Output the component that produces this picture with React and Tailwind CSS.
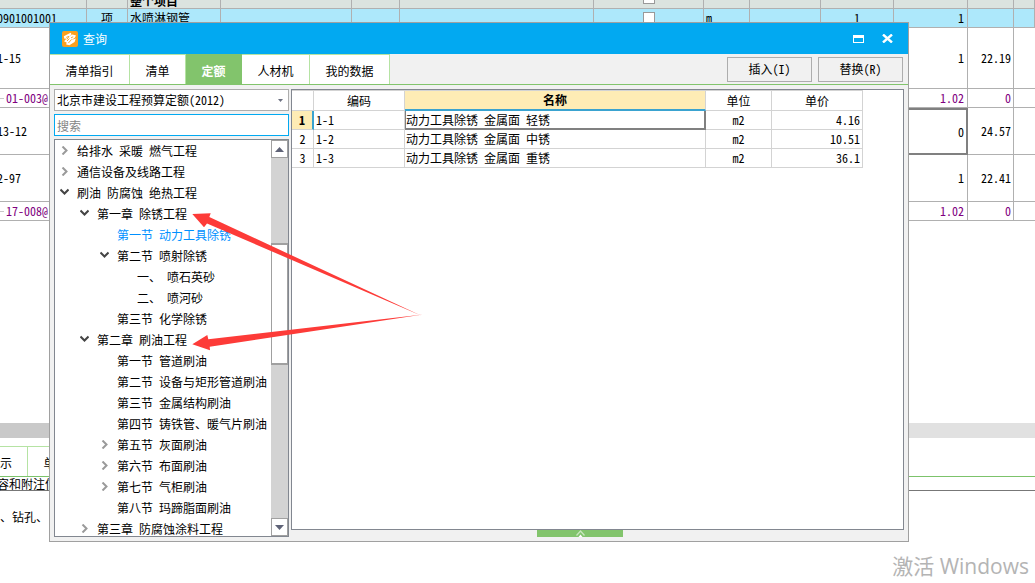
import { clsx } from "clsx";

const headCells = ["", "", "整个项目", "", "", "", "check", "", "", "", "", "", ""];
const itemCells = ["0901001001", "项", "水喷淋钢管", "", "", "", "check", "m", "", "1", "1", "", ""];

const sheetRows = [
  { code: "1-15", amount: "1", price: "22.19", size: "h-[61px]" },
  { code: "01-003@", amount: "1.02", price: "0", size: "h-[19px]", sub: true },
  { code: "13-12", amount: "0", price: "24.57", size: "h-[47px]", selected: true },
  { code: "2-97", amount: "1", price: "22.41", size: "h-[47px]" },
  { code: "17-008@", amount: "1.02", price: "0", size: "h-[19px]", sub: true },
];

const tabs = [
  { name: "清单指引", width: "w-20" },
  { name: "清单", width: "w-14" },
  { name: "定额", width: "w-14", active: true },
  { name: "人材机", width: "w-[68px]" },
  { name: "我的数据", width: "w-20" },
];

const tree = [
  { level: 0, text: "给排水 采暖 燃气工程", state: "closed" },
  { level: 0, text: "通信设备及线路工程", state: "closed" },
  { level: 0, text: "刷油 防腐蚀 绝热工程", state: "open" },
  { level: 1, text: "第一章 除锈工程", state: "open" },
  { level: 2, text: "第一节 动力工具除锈", selected: true },
  { level: 2, text: "第二节 喷射除锈", state: "open" },
  { level: 3, text: "一、 喷石英砂" },
  { level: 3, text: "二、 喷河砂" },
  { level: 2, text: "第三节 化学除锈" },
  { level: 1, text: "第二章 刷油工程", state: "open" },
  { level: 2, text: "第一节 管道刷油" },
  { level: 2, text: "第二节 设备与矩形管道刷油" },
  { level: 2, text: "第三节 金属结构刷油" },
  { level: 2, text: "第四节 铸铁管、暖气片刷油" },
  { level: 2, text: "第五节 灰面刷油", state: "closed" },
  { level: 2, text: "第六节 布面刷油", state: "closed" },
  { level: 2, text: "第七节 气柜刷油", state: "closed" },
  { level: 2, text: "第八节 玛蹄脂面刷油" },
  { level: 1, text: "第三章 防腐蚀涂料工程", state: "closed" },
];

const indents = ["pl-0", "pl-5", "pl-10", "pl-15"];

const quotas = [
  { code: "1-1", name: "动力工具除锈 金属面 轻锈", unit: "m2", price: "4.16" },
  { code: "1-2", name: "动力工具除锈 金属面 中锈", unit: "m2", price: "10.51" },
  { code: "1-3", name: "动力工具除锈 金属面 重锈", unit: "m2", price: "36.1" },
];

const SheetCell = ({ value, index, head }) => (
  <td
    className={clsx(
      "border-r border-b border-[#b0b0b0] p-0 whitespace-nowrap overflow-hidden",
      index === 0 && "-indent-[3px]",
      index === 1 && "text-center",
      index === 2 && "pl-0.5",
      index === 7 && "pl-0.5",
      index === 9 && "text-center",
      index === 10 && "text-right pr-[3px]"
    )}
  >
    <div className={clsx("flex flex-col", head ? "h-2 justify-end font-bold" : "h-[18px] justify-center")}>
      {value === "check" ? (
        <input
          type="checkbox"
          aria-label="选择"
          className={clsx(
            "appearance-none size-3 shrink-0 self-center border border-[#999] bg-white",
            head && "mb-1"
          )}
        />
      ) : (
        <span className={clsx(head && "leading-[14px]")}>{value}</span>
      )}
    </div>
  </td>
);

const Sheet = () => (
  <table className="w-full table-fixed border-separate border-spacing-0">
    <colgroup>
      <col className="w-[87px]" />
      <col className="w-[41px]" />
      <col className="w-[93px]" />
      <col className="w-[131px]" />
      <col className="w-12" />
      <col className="w-[194px]" />
      <col className="w-[110px]" />
      <col className="w-[46px]" />
      <col className="w-[71px]" />
      <col className="w-[73px]" />
      <col className="w-[74px]" />
      <col className="w-[46px]" />
      <col />
    </colgroup>
    <tbody>
      <tr className="bg-[#dbe3df]">
        {headCells.map((value, i) => (
          <SheetCell key={i} value={value} index={i} head />
        ))}
      </tr>
      <tr className="bg-[#ade8fb]">
        {itemCells.map((value, i) => (
          <SheetCell key={i} value={value} index={i} />
        ))}
      </tr>
      {sheetRows.map((row) => (
        <tr key={row.code} className={clsx(row.size, row.sub && "text-[#800080]")}>
          <td className="border-r border-b border-[#b0b0b0] p-0 whitespace-nowrap">
            {row.sub ? (
              <div className="flex items-center gap-0.5">
                <span className="w-1 h-px bg-[#c8c8c8]" />
                {row.code}
              </div>
            ) : (
              <div className="-indent-[3px]">{row.code}</div>
            )}
          </td>
          <td colSpan={9} className="border-r border-b border-[#b0b0b0] p-0" />
          <td
            className={clsx(
              "border-r border-b p-0 text-right",
              row.selected ? "border-r-2 border-t-2 border-b-2 border-[#808080] pr-0.5" : "border-[#b0b0b0] pr-[3px]"
            )}
          >
            {row.amount}
          </td>
          <td className="border-r border-b border-[#b0b0b0] p-0 pr-0.5 text-right">{row.price}</td>
          <td className="border-b border-[#b0b0b0] p-0" />
        </tr>
      ))}
    </tbody>
  </table>
);

const Chevron = ({ state }) => (
  <svg viewBox="0 0 9 9" className="size-[9px]" fill="none" strokeWidth="2">
    {state === "open" ? (
      <path d="M0.5 1.5 L4.5 5.5 L8.5 1.5" stroke="#444" />
    ) : (
      <path d="M2.5 0.5 L6.5 4.5 L2.5 8.5" stroke="#9a9a9a" />
    )}
  </svg>
);

const ScrollBar = () => (
  <div className="flex flex-col w-[17px] shrink-0 bg-[#d3d3d3]">
    <button aria-label="向上" className="flex items-center justify-center h-[18px] border border-[#a0a0a0] bg-white">
      <svg viewBox="0 0 9 5" className="w-[9px] h-[5px]">
        <path d="M4.5 0 L9 5 H0 Z" fill="#5f6377" />
      </svg>
    </button>
    <div className="h-[85px]" />
    <div className="h-[122px] border-y-2 border-x border-[#a0a0a0] bg-white" />
    <button aria-label="向下" className="flex items-center justify-center h-[18px] mt-auto border border-[#a0a0a0] bg-white">
      <svg viewBox="0 0 9 5" className="w-[9px] h-[5px]">
        <path d="M4.5 5 L9 0 H0 Z" fill="#5f6377" />
      </svg>
    </button>
  </div>
);

const Tree = () => (
  <div className="flex h-[398px] border border-[#828790] bg-white">
    <ul className="flex-1 min-w-0 overflow-hidden">
      {tree.map((node) => (
        <li key={node.text} className={clsx("flex items-center h-[21px] whitespace-nowrap", indents[node.level])}>
          <span className="flex justify-center w-[22px] pr-[3px] shrink-0">
            {node.state && (
              <button aria-label={node.text}>
                <Chevron state={node.state} />
              </button>
            )}
          </span>
          <span className={clsx(node.selected && "text-[#0090ff]")}>{node.text}</span>
        </li>
      ))}
    </ul>
    <ScrollBar />
  </div>
);

const QuotaTable = () => (
  <table className="w-[571px] table-fixed border-separate border-spacing-0">
    <colgroup>
      <col className="w-[22px]" />
      <col className="w-[91px]" />
      <col className="w-[301px]" />
      <col className="w-[66px]" />
      <col className="w-[91px]" />
    </colgroup>
    <thead>
      <tr className="h-[21px]">
        <th className="border-r border-y border-[#d3d3d3] p-0" />
        <th className="border-r border-y border-[#d3d3d3] p-0 font-normal">编码</th>
        <th className="border-r border-t border-b-2 border-r-[#d3d3d3] border-t-[#d3d3d3] border-b-[#3aa3d0] bg-[#feecb5] p-0 font-bold">
          名称
        </th>
        <th className="border-r border-y border-[#d3d3d3] p-0 font-normal">单位</th>
        <th className="border-r border-y border-[#d3d3d3] p-0 font-normal">单价</th>
      </tr>
    </thead>
    <tbody>
      {quotas.map((row, i) => (
        <tr key={row.code} className="h-[19px]">
          <td
            className={clsx(
              "border-b border-[#d3d3d3] p-0 text-center",
              i === 0 ? "border-r-2 border-r-[#3aa3d0] bg-[#feecb5] font-bold" : "border-r"
            )}
          >
            {i + 1}
          </td>
          <td className="border-r border-b border-[#d3d3d3] p-0 pl-0.5">{row.code}</td>
          <td
            className={clsx(
              "p-0 whitespace-nowrap",
              i === 0
                ? "border-r-2 border-b-2 border-l border-[#808080]"
                : "border-r border-b border-[#d3d3d3] pl-px"
            )}
          >
            {row.name}
          </td>
          <td className="border-r border-b border-[#d3d3d3] p-0 text-center">{row.unit}</td>
          <td className="border-r border-b border-[#d3d3d3] p-0 pr-0.5 text-right">{row.price}</td>
        </tr>
      ))}
    </tbody>
  </table>
);

const QueryWindow = () => (
  <section className="absolute left-[49px] right-[126px] top-[22px] border border-[#a0a0a0] bg-[#f1f1f1]">
    <header className="flex items-center h-[31px] pl-3 pr-[15px] bg-[#02a9f1] text-white">
      <svg viewBox="0 0 16 16" className="size-4 mr-[5px]">
        <rect width="16" height="16" rx="2" fill="#f8a01f" />
        <path
          d="M1.8 5.2 L8.6 1.8 L9.6 3.2 L7.6 5 L10.4 3.4 L14 4.4 L12.8 6.8 L9.4 9 L13.8 7.6 L12.6 11 L7.4 14.2 L4.2 13.4 L4.6 11.4 L2 10.2 L4.6 7.6 L2.4 7.8 Z"
          fill="#fff"
        />
        <path
          d="M4.2 6.4 L7 5.4 L5 8.4 M9 6.8 L11.2 5.8 M6.4 12 L9.6 8.4 M5 10 L7.4 7.6"
          fill="none"
          stroke="#f8a01f"
          strokeWidth="0.9"
        />
      </svg>
      <h1>查询</h1>
      <button aria-label="最大化" className="ml-auto">
        <svg viewBox="0 0 11 8" className="w-[11px] h-2">
          <path d="M0 0 H11 V8 H0 Z M1 3 V7 H10 V3 Z" fill="#fff" fillRule="evenodd" />
        </svg>
      </button>
      <button aria-label="关闭" className="ml-[18px]">
        <svg viewBox="0 0 11 9" className="w-[11px] h-[9px]">
          <path d="M1 0.5 L10 8.5 M10 0.5 L1 8.5" stroke="#fff" strokeWidth="2.4" />
        </svg>
      </button>
    </header>

    <div className="flex h-[31px] border-b border-[#82c46c]">
      <nav className="flex">
        {tabs.map((tab) => (
          <button
            key={tab.name}
            className={clsx(
              "border-t border-r pt-0.5",
              tab.width,
              tab.active
                ? "border-[#82c46c] bg-[#82c46c] text-white font-bold"
                : "border-[#b5e3a3] bg-white"
            )}
          >
            {tab.name}
          </button>
        ))}
      </nav>
      <div className="flex items-center gap-1.5 ml-auto pr-[5px]">
        <button className="w-[85px] h-[25px] border border-[#adadad]">插入(I)</button>
        <button className="w-[85px] h-[25px] border border-[#adadad]">替换(R)</button>
      </div>
    </div>

    <div className="flex gap-0.5 p-1">
      <div className="flex flex-col gap-[3px] w-[235px] shrink-0">
        <div className="grid items-center">
          <select
            aria-label="定额库"
            className="col-start-1 row-start-1 appearance-none h-[22px] pl-0.5 border border-[#adadad] bg-white"
          >
            <option>北京市建设工程预算定额(2012)</option>
          </select>
          <svg viewBox="0 0 5 3" className="col-start-1 row-start-1 justify-self-end w-[5px] h-[3px] mr-1.5 pointer-events-none">
            <path d="M0 0 H5 L2.5 3 Z" fill="#6d7182" />
          </svg>
        </div>
        <input
          type="text"
          aria-label="搜索"
          placeholder="搜索"
          className="h-[22px] pl-0.5 border border-[#02a9f1] bg-white placeholder:text-[#858585]"
        />
        <Tree />
      </div>
      <div className="flex flex-col flex-1 min-w-0">
        <div className="flex-1 border border-[#828790] bg-white overflow-hidden">
          <QuotaTable />
        </div>
        <button aria-label="展开" className="flex justify-center items-end w-[86px] h-[7px] ml-[246px] bg-[#82c46c]">
          <svg viewBox="0 0 9 7" className="w-[9px] h-[7px]" fill="none">
            <path d="M0.5 5.5 L4.5 1 L8.5 5.5" stroke="#c9e6bf" strokeWidth="1.3" />
            <path d="M2.5 7 L4.5 4.5 L6.5 7 Z" fill="#fff" />
          </svg>
        </button>
      </div>
    </div>
  </section>
);

const App = () => {
  return (
    <div className="relative min-h-screen overflow-hidden bg-white text-black text-[12px] leading-4 font-['Noto_Sans_Mono_CJK_SC','Noto_Sans_CJK_SC',monospace]">
      <Sheet />
      <div className="h-[202px]" />
      <div className="flex h-[15px] bg-[#e1e1e1]">
        <div className="w-1/2 bg-[#c9c9c9]" />
      </div>
      <div className="h-2" />
      <nav className="flex h-[31px] border-b border-[#7cc36b]">
        <button className="w-7 pt-0.5 pr-4 border-t border-r border-[#b5e3a3] text-right">示</button>
        <button className="w-14 pt-0.5 border-t border-r border-[#b5e3a3]">单价</button>
      </nav>
      <div className="h-3.5 leading-[14px] -indent-[3px] border-b border-[#777]">容和附注信息</div>
      <p className="pt-[18px]">、钻孔、</p>

      <QueryWindow />

      <svg viewBox="0 0 240 150" className="absolute left-[190px] top-[206px] w-[240px] h-[150px] pointer-events-none">
        <path d="M2.3 8 L20.7 7.3 L19.3 11 L232 110 L17 17.5 L14 21.3 Z" fill="#fd3b38" />
        <path d="M2.3 138.3 L17.3 129 L18.3 133.3 L233 108.6 L19.7 140.7 L20 144.3 Z" fill="#fd3b38" />
      </svg>

      <div className="absolute right-1.5 bottom-[3px] text-[21px] leading-7 text-[#b4b4b4] font-['Open_Sans','Noto_Sans_CJK_SC',sans-serif]">
        激活 Windows
      </div>
    </div>
  );
};

export default App;
